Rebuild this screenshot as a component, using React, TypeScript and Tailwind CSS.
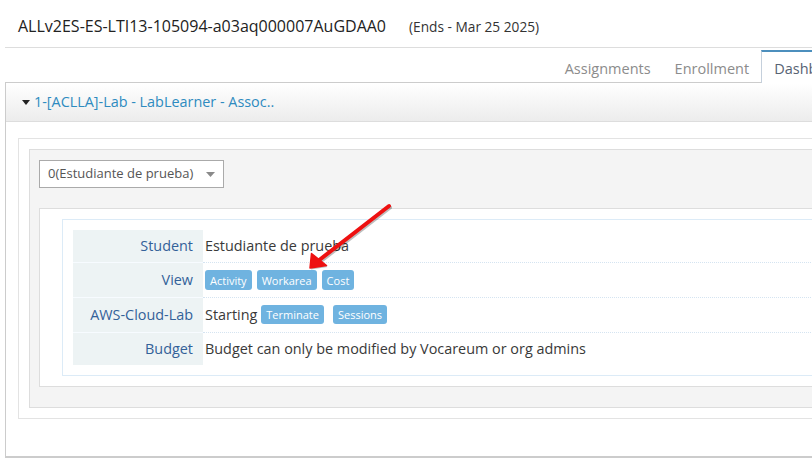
import React from "react";

const font = { fontFamily: '"Open Sans", "Noto Sans", "Liberation Sans", sans-serif' };

function Badge({ children, tall }: { children: React.ReactNode; tall?: boolean }) {
  return (
    <span
      className={
        "flex items-center rounded-[3px] bg-[#6fb3e0] px-[5px] text-[11px] leading-none text-white " +
        (tall ? "h-[20px]" : "h-[19px]")
      }
    >
      {children}
    </span>
  );
}

function Row({
  label,
  h,
  first,
  children,
}: {
  label: string;
  h: string;
  first?: boolean;
  children: React.ReactNode;
}) {
  return (
    <div className={"flex " + h}>
      <div
        className={
          "w-[130px] shrink-0 bg-[#edf3f4] pr-[10px] flex items-center justify-end text-[14.4px] text-[#336199] " +
          (first ? "" : "border-t border-[#f7fbff]")
        }
      >
        {label}
      </div>
      <div
        className={
          "flex-1 flex items-center pl-[2px] text-[14.4px] text-[#393939] " +
          (first ? "" : "border-t border-dotted border-[#d5e4f1]")
        }
      >
        {children}
      </div>
    </div>
  );
}

export default function App() {
  return (
    <div className="relative w-[812px] h-[460px] overflow-hidden bg-white" style={font}>
      <div className="ml-[5px] w-[857px]">
        {/* Title */}
        <div className="h-[48px] border-b border-[#dddddd] pl-[13px] pt-[14px] flex items-baseline">
          <span className="text-[16px] leading-[24px] text-[#222]">
            ALLv2ES-ES-LTI13-105094-a03aq000007AuGDAA0
          </span>
          <span className="ml-[23px] text-[13.7px] text-[#333]">(Ends - Mar 25 2025)</span>
        </div>

        {/* Tabs */}
        <div className="relative z-10 -mb-px flex justify-end pt-[2px] text-[14.5px] leading-[20px]">
          <div className="h-[33px] border-t-2 border-transparent px-[12px] pt-[7px] text-[#8c8c8c]">
            Assignments
          </div>
          <div className="h-[33px] border-t-2 border-transparent px-[12px] pt-[7px] text-[#8c8c8c]">
            Enrollment
          </div>
          <div className="h-[33px] border-t-2 border-l border-r border-t-[#4c8fbd] border-l-[#c5d0dc] border-r-[#c5d0dc] bg-white px-[12px] pt-[7px] text-[#576373]">
            Dashboard
          </div>
        </div>

        {/* Panel */}
        <div className="h-[376px] border border-b-2 border-[#cccccc]">
          <div className="h-[39px] border-b border-[#dddddd] bg-gradient-to-b from-white to-[#ececec] flex items-center pl-[16px]">
            <svg width="8" height="5" viewBox="0 0 8 5" className="mr-[4px]">
              <polygon points="0,0 8,0 4,5" fill="#222" />
            </svg>
            <span className="text-[14.4px] text-[#2e8bc0]">1-[ACLLA]-Lab - LabLearner - Assoc..</span>
          </div>

          <div className="pl-[12px] pt-[16px]">
            <div className="border border-[#e3e3e3] p-[10px] bg-white">
              <div className="border border-[#dddddd] bg-[#f4f4f4] pl-[9px] pt-[10px] pb-[20px]">
                <div className="w-[185px] h-[28px] border border-[#aaaaaa] bg-white flex items-center pl-[8px] text-[13px] text-[#555]">
                  <span>0(Estudiante de prueba)</span>
                  <svg width="9" height="5" viewBox="0 0 9 5" className="ml-[13px]">
                    <polygon points="0,0 9,0 4.5,5" fill="#8a8a8a" />
                  </svg>
                </div>

                <div className="mt-[20px] border border-[#dddddd] bg-white pl-[22px] pt-[10px] pb-[10px]">
                  <div className="border border-[#dcebf7] p-[10px]">
                    <Row label="Student" h="h-[32px]" first>
                      Estudiante de prueba
                    </Row>
                    <Row label="View" h="h-[35px]">
                      <div className="flex items-center gap-[5px]">
                        <Badge tall>Activity</Badge>
                        <Badge tall>Workarea</Badge>
                        <Badge tall>Cost</Badge>
                      </div>
                    </Row>
                    <Row label="AWS-Cloud-Lab" h="h-[35px]">
                      <div className="flex items-center">
                        <span>Starting</span>
                        <span className="ml-[4px] flex">
                          <Badge>Terminate</Badge>
                        </span>
                        <span className="ml-[9px] flex">
                          <Badge>Sessions</Badge>
                        </span>
                      </div>
                    </Row>
                    <Row label="Budget" h="h-[33px]">
                      Budget can only be modified by Vocareum or org admins
                    </Row>
                  </div>
                </div>
              </div>
            </div>
          </div>
        </div>
      </div>

      {/* Red annotation arrow */}
      <svg
        className="pointer-events-none absolute left-0 top-0"
        width="812"
        height="460"
        viewBox="0 0 812 460"
      >
        <g transform="translate(1,1.5)" opacity="0.25">
          <line x1="389" y1="206" x2="318" y2="261" stroke="#000" strokeWidth="4" strokeLinecap="round" />
          <polygon points="310,268 311.5,253.5 326.5,265.5" fill="#000" />
        </g>
        <line x1="389" y1="206" x2="318" y2="261" stroke="#ee1111" strokeWidth="4" strokeLinecap="round" />
        <polygon points="310,268 311.5,253.5 326.5,265.5" fill="#ee1111" stroke="#ee1111" strokeWidth="1.5" strokeLinejoin="round" />
      </svg>
    </div>
  );
}
